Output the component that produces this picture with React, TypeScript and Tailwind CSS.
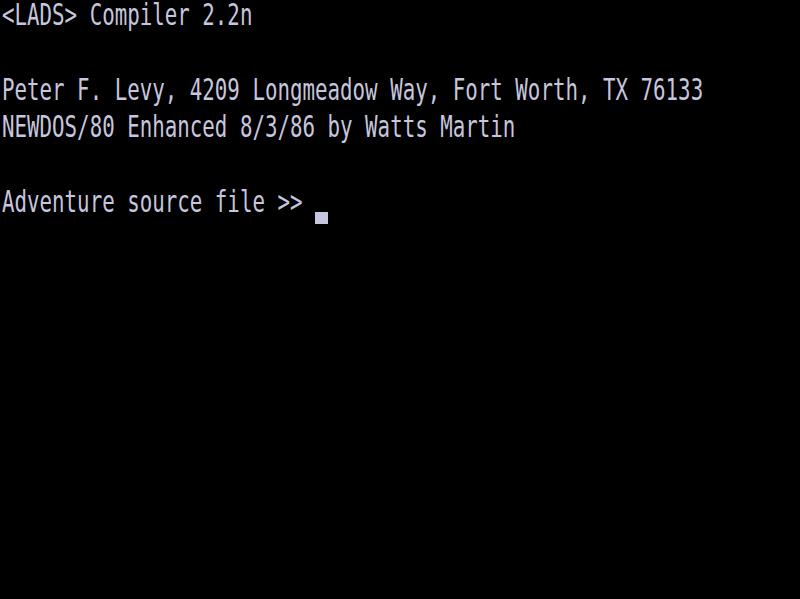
import React from 'react';

const lines = [
  '<LADS> Compiler 2.2n',
  '',
  'Peter F. Levy, 4209 Longmeadow Way, Fort Worth, TX 76133',
  'NEWDOS/80 Enhanced 8/3/86 by Watts Martin',
  '',
  'Adventure source file >> ',
];

const App = () => {
  return (
    <div className="w-[800px] h-[599px] bg-black overflow-hidden pl-[2px] text-[#c6c6de] font-['DejaVu_Sans_Mono',monospace] text-[20.8px] leading-[20px]">
      {lines.map((line, i) => (
        <div key={i} className="h-[37.44px] flex items-start">
          <div className="whitespace-pre origin-top-left scale-y-[1.45]">{line}</div>
          {i === lines.length - 1 && (
            <div className="w-[13px] h-[12px] mt-[25px] bg-[#c6c6de]" />
          )}
        </div>
      ))}
    </div>
  );
};

export default App;
